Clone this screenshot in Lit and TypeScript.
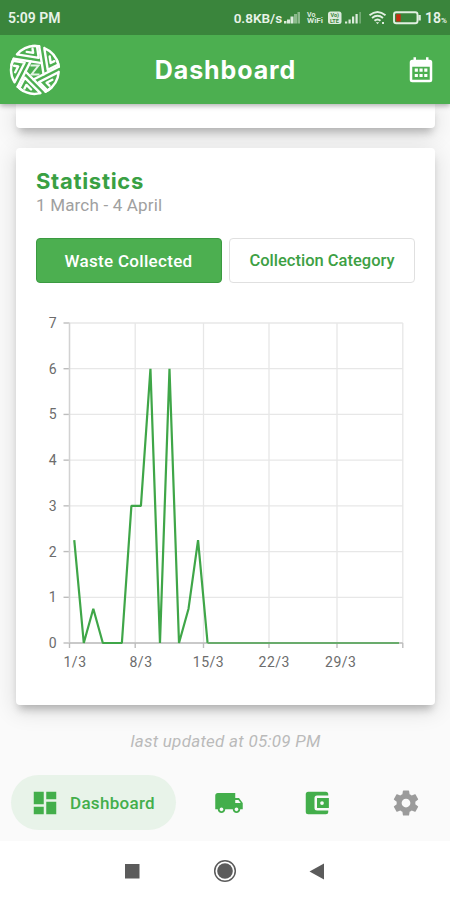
import { LitElement, html, svg, css } from "lit";
import { customElement, property } from "lit/decorators.js";

const LEFT = 69.5, RIGHT = 402.8, TOP = 23, BOTTOM = 343, DAYS = 35;
const collected = [2.25, 0, 0.75, 0, 0, 0, 3, 3, 6, 0, 6, 0, 0.75, 2.25];
const dayX = (i: number) => LEFT + ((RIGHT - LEFT) / DAYS) * i;
const valueY = (v: number) => BOTTOM - ((BOTTOM - TOP) / 7) * v;
const weeks = [
  { x: 69.5, label: "1/3", at: 75 },
  { x: 135.2, label: "8/3", at: 141 },
  { x: 203.5, label: "15/3", at: 208.5 },
  { x: 269, label: "22/3", at: 274.3 },
  { x: 337, label: "29/3", at: 340.8 },
  { x: 402.8, label: "", at: 0 },
];

@customElement("waste-chart")
class WasteChart extends LitElement {
  static styles = css`
    :host { display: block; }
    svg { display: block; }
    text { font: 14px Roboto, sans-serif; fill: #6c6c6c; letter-spacing: 0.5px; }
    .grid { stroke: #e7e7e7; stroke-width: 1.3; }
    .axis { stroke: #bdbdbd; stroke-width: 1.4; }
    .side { stroke: #d2d2d2; stroke-width: 1.4; }
    .series { fill: none; stroke: #3fa648; stroke-width: 2.2; stroke-linejoin: bevel; }
    .tail { stroke: #69ab6c; stroke-width: 1.9; }
  `;
  render() {
    const points = collected.concat([0]).map((v, i) => `${dayX(i + 0.5)},${valueY(v)}`).join(" ");
    return html`<svg width="419" height="400" viewBox="16 0 419 400">
      ${[0, 1, 2, 3, 4, 5, 6, 7].map((v) => svg`
        <line class="grid" x1=${LEFT} x2=${RIGHT} y1=${valueY(v)} y2=${valueY(v)} />
        <line class="axis" x1=${LEFT - 6} x2=${LEFT} y1=${valueY(v)} y2=${valueY(v)} />
        <text x="57" y=${valueY(v) + 5} text-anchor="end">${v}</text>`)}
      ${weeks.map((w) => svg`
        <line class="grid" x1=${w.x} x2=${w.x} y1=${TOP} y2=${BOTTOM} />
        <line class="axis" x1=${w.x} x2=${w.x} y1=${BOTTOM} y2=${BOTTOM + 5} />
        <text x=${w.at} y=${BOTTOM + 23.5} text-anchor="middle">${w.label}</text>`)}
      <line class="side" x1=${LEFT} x2=${LEFT} y1=${TOP} y2=${BOTTOM} />
      <line class="axis" x1=${LEFT} x2=${RIGHT} y1=${BOTTOM} y2=${BOTTOM} />
      <polyline class="series" points=${points} />
      <line class="tail" x1=${dayX(14.5)} x2=${dayX(34.6)} y1=${BOTTOM} y2=${BOTTOM} />
    </svg>`;
  }
}

@customElement("brand-logo")
class BrandLogo extends LitElement {
  static styles = css`
    :host { display: block; }
    svg { display: block; }
    .line { fill: none; stroke: #fff; stroke-width: 2.4; stroke-linejoin: round; stroke-linecap: round; }
    .z { fill: none; stroke: #e4f4e5; stroke-width: 2; }
  `;
  render() {
    return html`<svg width="52" height="52" viewBox="-26 -26 52 52">
      ${[0, 72, 144, 216, 288].map((a) => svg`<g transform="rotate(${a - 9})">
        <path class="line" d="M7.800 -22.800V5.700M12.600 -20.200V1.800L23.900 -1.800A24 24 0 0 0 12.600 -20.200M16.600 -11V-4.500L20.500 -5.700" />
        <path class="line" d="M7.800 -22.800A24.100 24.100 0 0 0 1 -24.100" />
      </g>`)}
      <path class="z" d="M-4.500 -4.500H3.500L-3.500 4.500H4.500" />
    </svg>`;
  }
}

@customElement("ui-icon")
class UiIcon extends LitElement {
  @property() name = "";
  static styles = css`
    :host { display: block; }
    svg { display: block; fill: currentColor; }
  `;
  static paths: Record<string, string> = {
    dashboard: "M3 13h8V3H3v10zm0 8h8v-6H3v6zm10 0h8V11h-8v10zm0-18v6h8V3h-8z",
    wallet: "M21 18v1a2 2 0 0 1-2 2H5a2 2 0 0 1-2-2V5a2 2 0 0 1 2-2h14a2 2 0 0 1 2 2v1h-9a2 2 0 0 0-2 2v8a2 2 0 0 0 2 2zM12 16h9.500V8H12zm4-2.500a1.500 1.500 0 1 1 0-3 1.500 1.500 0 0 1 0 3z",
    truck: "M20 8h-3V4H3c-1.1 0-2 .9-2 2v11h2c0 1.66 1.34 3 3 3s3-1.34 3-3h6c0 1.66 1.34 3 3 3s3-1.34 3-3h2v-5l-3-4zM6 18.5c-.83 0-1.5-.67-1.5-1.5s.67-1.5 1.5-1.5 1.5.67 1.5 1.5-.67 1.5-1.5 1.5zm13.500-9l1.960 2.500H17V9.500h2.500zM18 18.500c-.83 0-1.500-.67-1.500-1.500s.67-1.500 1.500-1.500 1.500.67 1.500 1.500-.67 1.500-1.500 1.500z",
    gear: "M19.430 12.980c.04-.32.07-.64.07-.98s-.03-.66-.07-.98l2.110-1.650c.19-.15.24-.42.12-.64l-2-3.460c-.12-.22-.39-.3-.61-.22l-2.490 1c-.52-.4-1.080-.73-1.690-.98l-.38-2.650C14.460 2.180 14.250 2 14 2h-4c-.25 0-.46.18-.49.42l-.38 2.650c-.61.25-1.170.59-1.690.98l-2.490-1c-.23-.09-.49 0-.61.22l-2 3.460c-.13.22-.07.49.12.64l2.110 1.650c-.04.32-.07.65-.07.98s.03.66.07.98l-2.110 1.650c-.19.15-.24.42-.12.64l2 3.460c.12.22.39.3.61.22l2.490-1c.52.4 1.080.73 1.690.98l.38 2.650c.03.24.24.42.49.42h4c.25 0 .46-.18.49-.42l.38-2.650c.61-.25 1.170-.59 1.690-.98l2.490 1c.23.09.49 0 .61-.22l2-3.460c.12-.22.07-.49-.12-.64l-2.110-1.650zM12 15.500c-1.930 0-3.500-1.570-3.500-3.500s1.570-3.500 3.500-3.500 3.500 1.570 3.500 3.500-1.570 3.500-3.500 3.500z",
    calendar: "M5 3h1V1h2v2h8V1h2v2h1a2 2 0 0 1 2 2v14a2 2 0 0 1-2 2H5a2 2 0 0 1-2-2V5a2 2 0 0 1 2-2zM5 8.500V19h14V8.500zM7 10h2.500v2.500H7zm3.800 0h2.500v2.500h-2.500zm3.800 0h2.500v2.500h-2.500zM7 14.300h2.500v2.500H7zm3.800 0h2.500v2.500h-2.500zm3.800 0h2.500v2.500h-2.500z",
  };
  render() {
    return html`<svg width="30" height="30" viewBox="0 0 24 24"><path fill-rule="evenodd" d=${UiIcon.paths[this.name]} /></svg>`;
  }
}

@customElement("status-icons")
class StatusIcons extends LitElement {
  static styles = css`
    :host { display: block; }
    svg { display: block; }
    .fill { fill: #dcebdc; }
    .dim { fill: #8cba8c; }
    .line { fill: none; stroke: #e2f0e2; stroke-width: 1.9; }
    .low { fill: #c62d12; }
    .tiny { font: 700 7px Roboto, sans-serif; fill: #dcebdc; }
    .badge { font: 700 5.5px Roboto, sans-serif; fill: #3a853c; }
  `;
  render() {
    return html`<svg width="142" height="20" viewBox="282 8 142 20">
      <path class="fill" d="M283 23.500v-2.500h2.500v2.500zM286 23.500v-4h3v4zM289.500 23.500v-7h3v7z" />
      <path class="dim" d="M293 23.500V14h3v9.500zM296.500 23.500V12h2.500v11.500z" />
      <text class="tiny" x="306" y="16.500">Vo</text>
      <text class="tiny" x="306" y="23.300" textLength="16" lengthAdjust="spacingAndGlyphs">WiFi</text>
      <rect class="fill" x="327" y="11.500" width="13.500" height="12.500" rx="2.500" />
      <text class="badge" x="329.500" y="17">Vo)</text>
      <text class="badge" x="329" y="22.500">LTE</text>
      <path class="fill" d="M344 23.500v-2h2.200v2zM347.500 23.500v-4h2.200v4zM351 23.500v-7h2.200v7zM354.500 23.500V14h2.200v9.500z" />
      <path class="dim" d="M358.500 23.500V12h1.200v11.500z" />
      <path class="line" d="M368.500 15.300q8-6.600 16 0M371 18q5.500-4.500 11 0M373.500 20.800q3-2.600 6 0" />
      <path class="fill" d="M374.800 22.200h3.400l-1.700 2.100zM381 22h2v2h-2z" />
      <rect class="line" x="393" y="12.300" width="23.500" height="11" rx="2.300" />
      <path class="fill" d="M417.300 15h2.500v5.500h-2.500z" />
      <path class="low" d="M395.200 14.200h4.500v7.300h-4.500z" />
    </svg>`;
  }
}

@customElement("app-root")
class AppRoot extends LitElement {
  static styles = css`
    :host { display: flex; flex-direction: column; height: 900px; width: 450px; overflow: hidden; background: #fafafa; font-family: Roboto, sans-serif; }
    * { box-sizing: border-box; }
    .status { height: 35px; flex: none; display: flex; align-items: center; background: #3a853c; color: #e8f3e8; padding: 1px 3px 0 8px; font-size: 14px; font-weight: 600; z-index: 3; }
    .rate { margin-left: auto; margin-right: 1px; font-size: 13.500px; }
    .percent { font-size: 8px; padding-top: 4px; }
    .header { height: 69px; flex: none; display: grid; grid-template-columns: 52px 1fr 52px; align-items: center; background: #4caf50; color: #fff; padding: 1px 14px 0 9px; z-index: 2; box-shadow: 0 2px 5px rgba(0,0,0,.3); }
    .title { margin: 0; text-align: center; font: 700 25px/68px Inter, sans-serif; letter-spacing: 0.9px; padding-left: 6px; }
    .action { justify-self: end; padding-top: 2px; }
    .content { flex: 1; min-height: 0; display: flex; flex-direction: column; padding: 0 15px 0 16px; }
    .card { flex: none; background: #fff; border-radius: 4px; box-shadow: 0 7px 9px -3px rgba(0,0,0,.24), 0 5px 22px 2px rgba(0,0,0,.11); }
    .previous { height: 24px; border-radius: 0 0 4px 4px; }
    .stats { height: 557px; margin-top: 20px; padding-top: 20px; }
    .heading { margin: 0 20px; font: 700 22px/27px Inter, sans-serif; color: #39a043; letter-spacing: 0.7px; }
    .dates { margin: 0 20px; font-size: 17px; line-height: 21px; color: #a0a0a0; letter-spacing: 0.18px; }
    .tabs { display: grid; grid-template-columns: 186px 186px; gap: 7.500px; margin: 22px 19.500px 17px; }
    .tab { height: 45px; border: 1px solid #e0e0e0; border-radius: 4px; display: flex; align-items: center; justify-content: center; color: #3da044; font-size: 16.500px; font-weight: 500; }
    .on { background: #4caf50; border-color: #3b9a41; color: #fff; font-size: 17px; letter-spacing: 0.3px; }
    .updated { text-align: center; margin-top: 25px; line-height: 22px; font-size: 17px; font-style: italic; color: #bababa; letter-spacing: 0.26px; }
    .bar { height: 76px; flex: none; display: flex; align-items: flex-start; padding: 10px 0 0 11px; color: #43ae4b; background: #fafafa; }
    .pill { width: 165px; height: 55px; border-radius: 28px; background: #e8f3e9; display: flex; align-items: center; padding-left: 19px; gap: 10px; font-size: 17px; font-weight: 500; letter-spacing: 0.3px; }
    .item { height: 55px; width: 88.500px; display: flex; align-items: center; justify-content: center; }
    .spaced { margin-left: 8.500px; }
    .muted { color: #9b9b9b; }
    .system { height: 59px; flex: none; background: #fff; display: flex; justify-content: center; align-items: center; }
    .system svg { display: block; fill: #5b5b5b; }
    .system .ring { fill: none; stroke: #5b5b5b; stroke-width: 1.5; }
  `;
  render() {
    return html`
      <div class="status"><span>5:09 PM</span><span class="rate">0.8KB/s</span><status-icons></status-icons><span>18</span><span class="percent">%</span></div>
      <header class="header"><brand-logo></brand-logo><h1 class="title">Dashboard</h1><ui-icon class="action" name="calendar"></ui-icon></header>
      <main class="content">
        <div class="card previous"></div>
        <section class="card stats">
          <h2 class="heading">Statistics</h2>
          <p class="dates">1 March - 4 April</p>
          <div class="tabs"><div class="tab on">Waste Collected</div><div class="tab">Collection Category</div></div>
          <waste-chart></waste-chart>
        </section>
        <div class="updated">last updated at 05:09 PM</div>
      </main>
      <nav class="bar">
        <div class="pill"><ui-icon name="dashboard"></ui-icon><span>Dashboard</span></div>
        <div class="item spaced"><ui-icon name="truck"></ui-icon></div>
        <div class="item"><ui-icon name="wallet"></ui-icon></div>
        <div class="item muted"><ui-icon name="gear"></ui-icon></div>
      </nav>
      <div class="system"><svg width="210" height="26" viewBox="120 858 210 26">
        <path d="M125 864h14.500v14.500H125zM324 863.500v16L309.500 871.500z" />
        <circle cx="225" cy="871" r="7.800" /><circle class="ring" cx="225" cy="871" r="10.300" />
      </svg></div>`;
  }
}
